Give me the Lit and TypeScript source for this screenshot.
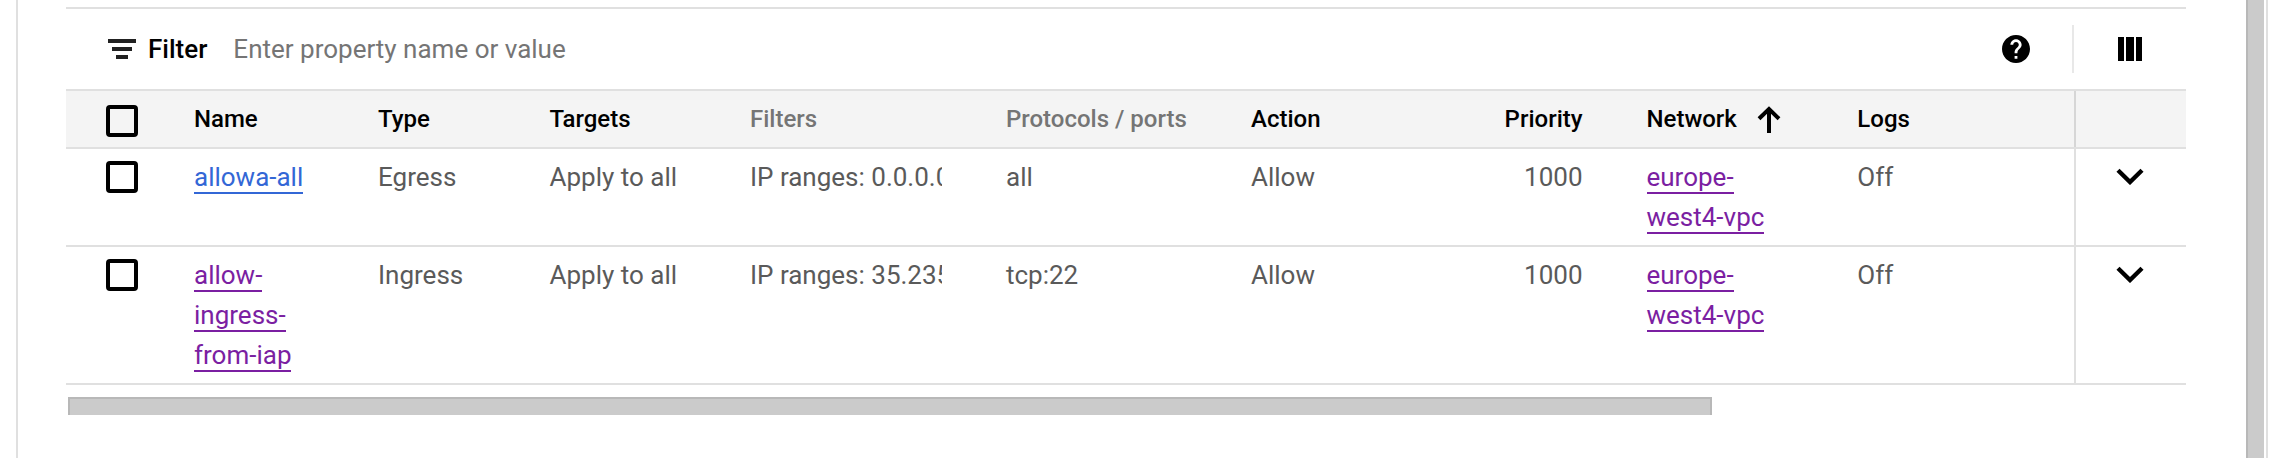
import { LitElement, html, css } from "lit";
import { customElement } from "lit/decorators.js";
import { classMap } from "lit/directives/class-map.js";

interface Rule {
  name: string;
  visited: boolean;
  type: string;
  targets: string;
  filters: string;
  ports: string;
  action: string;
  priority: number;
  network: string;
  logs: string;
}

const RULES: Rule[] = [
  { name: "allowa-all", visited: false, type: "Egress", targets: "Apply to all", filters: "IP ranges: 0.0.0.0", ports: "all", action: "Allow", priority: 1000, network: "europe-west4-vpc", logs: "Off" },
  { name: "allow-ingress-from-iap", visited: true, type: "Ingress", targets: "Apply to all", filters: "IP ranges: 35.235", ports: "tcp:22", action: "Allow", priority: 1000, network: "europe-west4-vpc", logs: "Off" },
];

@customElement("app-root")
export class AppRoot extends LitElement {
  static styles = css`
    :host {
      display: flex;
      box-sizing: border-box;
      height: 458px;
      padding-left: 16px;
      background: #fff;
      overflow: hidden;
      font-family: Roboto, "Liberation Sans", sans-serif;
      font-size: 26px;
      line-height: 40px;
      color: #5a5a5a;
    }
    * { box-sizing: border-box; }
    svg { display: block; flex: none; }
    .panel {
      flex: 1;
      border-left: 2px solid #e0e0e0;
      padding: 7px 60px 0 48px;
    }
    .v-thumb {
      width: 18px;
      background: #cbcbcb;
      border-left: 2px solid #b8b8b8;
    }
    .v-edge {
      width: 2px;
      margin: 0 2px;
      background: #e0e0e0;
    }
    .toolbar {
      display: flex;
      align-items: center;
      height: 82px;
      border-top: 2px solid #e0e0e0;
      padding: 0 44px 0 42px;
    }
    .filter-label {
      margin-left: 12px;
      font-weight: 500;
      color: #000;
    }
    .filter-hint {
      margin-left: 26px;
      flex: 1;
      color: #757575;
    }
    .divider {
      width: 2px;
      height: 48px;
      margin: 0 44px 0 42px;
      background: #e8e8e8;
    }
    .row {
      display: grid;
      grid-template-columns: 128px 184px 171.5px 200.5px 256px 245px 194px 201.5px 210.8px 216.7px 112px;
      border-bottom: 2px solid #e0e0e0;
    }
    .head {
      height: 60px;
      border-top: 2px solid #e0e0e0;
      background: #f4f4f4;
      font-size: 24px;
      font-weight: 500;
      color: #000;
    }
    .cell { padding-top: 8px; }
    .body .cell { padding-bottom: 8px; }
    .muted { color: #757575; }
    .check { padding: 12px 0 0 40px; }
    .head .check { padding-top: 14px; }
    .box {
      width: 32px;
      height: 32px;
      border: 4px solid #000;
      border-radius: 4px;
    }
    .name { padding-right: 70px; }
    .filters { padding-right: 64px; }
    .clip { overflow: hidden; white-space: nowrap; }
    .priority { text-align: right; padding-right: 64px; }
    .network { padding-right: 76px; }
    .head .network { display: flex; gap: 20px; padding-right: 0; }
    .sort { margin-top: 7px; }
    .more { border-left: 2px solid #e0e0e0; padding-left: 40px; }
    .head .more { border-color: #d6d6d6; }
    .chev { margin-top: 11px; }
    .link {
      color: #3367d6;
      border-bottom: 2px solid #3367d6;
    }
    .visited { color: #7b1fa2; border-color: #7b1fa2; }
    .h-thumb {
      width: 1644px;
      height: 18px;
      margin: 12px 0 0 2px;
      background: #cbcbcb;
      border: 2px solid #b8b8b8;
      border-bottom: 0;
    }
  `;

  private renderRule(r: Rule) {
    return html`
      <div class="row body">
        <div class="cell check"><div class="box"></div></div>
        <div class="cell name"><a class=${classMap({ link: true, visited: r.visited })}>${r.name}</a></div>
        <div class="cell">${r.type}</div>
        <div class="cell">${r.targets}</div>
        <div class="cell filters"><div class="clip">${r.filters}</div></div>
        <div class="cell">${r.ports}</div>
        <div class="cell">${r.action}</div>
        <div class="cell priority">${r.priority}</div>
        <div class="cell network"><a class="link visited">${r.network}</a></div>
        <div class="cell">${r.logs}</div>
        <div class="cell more">
          <svg class="chev" width="28" height="17" viewBox="0 0 28 17">
            <path d="M2 2.2 14 14 26 2.2" fill="none" stroke="#000" stroke-width="4.4" />
          </svg>
        </div>
      </div>
    `;
  }

  render() {
    return html`
      <div class="panel">
        <div class="toolbar">
          <svg width="28" height="20" viewBox="0 0 28 20" fill="#212121">
            <path d="M0 0h28v4H0zM4 8h20v4H4zM8 16h12v4H8z" />
          </svg>
          <span class="filter-label">Filter</span>
          <span class="filter-hint">Enter property name or value</span>
          <svg width="28" height="28" viewBox="2 2 20 20">
            <path d="M12 2C6.48 2 2 6.48 2 12s4.48 10 10 10 10-4.48 10-10S17.52 2 12 2zm1 17h-2v-2h2v2zm2.07-7.75l-.9.92C13.45 12.9 13 13.5 13 15h-2v-.5c0-1.1.45-2.1 1.17-2.83l1.24-1.26c.37-.36.59-.86.59-1.41 0-1.1-.9-2-2-2s-2 .9-2 2H8c0-2.21 1.79-4 4-4s4 1.79 4 4c0 .88-.36 1.68-.93 2.25z" />
          </svg>
          <div class="divider"></div>
          <svg width="24" height="24" viewBox="0 0 24 24">
            <path d="M0 0h6v24H0zM8 0h8v24H8zM18 0h6v24h-6z" />
          </svg>
        </div>
        <div class="row head">
          <div class="cell check"><div class="box"></div></div>
          <div class="cell">Name</div>
          <div class="cell">Type</div>
          <div class="cell">Targets</div>
          <div class="cell muted">Filters</div>
          <div class="cell muted">Protocols / ports</div>
          <div class="cell">Action</div>
          <div class="cell priority">Priority</div>
          <div class="cell network">
            <span>Network</span>
            <svg class="sort" width="24" height="27" viewBox="0 0 24 27">
              <path d="M12 27V3M2 12.7 12 3 22 12.7" fill="none" stroke="#000" stroke-width="4" />
            </svg>
          </div>
          <div class="cell">Logs</div>
          <div class="cell more"></div>
        </div>
        ${RULES.map((r) => this.renderRule(r))}
        <div class="h-thumb"></div>
      </div>
      <div class="v-thumb"></div>
      <div class="v-edge"></div>
    `;
  }
}
